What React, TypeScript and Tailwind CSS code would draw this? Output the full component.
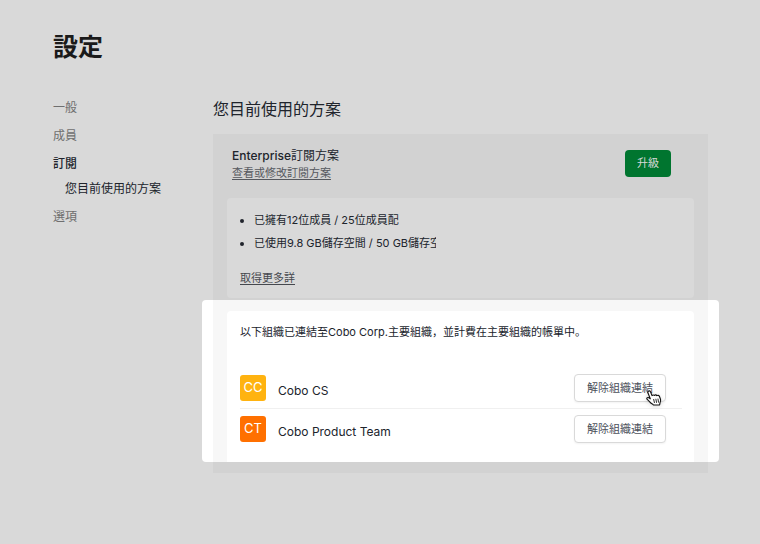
import React from 'react';

interface NavItem {
  id: string;
  label: string;
  active?: boolean;
  children?: string[];
}

interface Organization {
  id: string;
  initials: string;
  name: string;
  color: string;
  hovered?: boolean;
}

const NAV_ITEMS: NavItem[] = [
  { id: 'general', label: '一般' },
  { id: 'members', label: '成員' },
  { id: 'subscription', label: '訂閱', active: true, children: ['您目前使用的方案'] },
  { id: 'options', label: '選項' },
];

const ORGANIZATIONS: Organization[] = [
  { id: 'cs', initials: 'CC', name: 'Cobo CS', color: 'bg-[#ffb310]', hovered: true },
  { id: 'product', initials: 'CT', name: 'Cobo Product Team', color: 'bg-[#ff7000]' },
];

const HandCursor: React.FC = () => (
  <svg
    aria-hidden="true"
    viewBox="0 0 16 17"
    className="pointer-events-none absolute top-[15px] left-[71px] h-[17px] w-4 drop-shadow-sm"
  >
    <path
      d="M2.3 1.3C3 .6 4.1.8 4.5 1.8L6 5.6C6.5 4.8 7.8 4.7 8.4 5.5C9 4.7 10.3 4.7 10.9 5.6C11.7 5 13 5.3 13.4 6.3L14.4 9C14.9 10.4 14.5 11.6 14 12.8L13.6 15H7.4L6.7 14.2C5.3 13.4 4.4 12.8 3.5 11.6L1 9.2C.4 8.2 1.3 7.1 2.4 7.6L4.3 8.8L1.9 2.8C1.7 2.2 1.8 1.7 2.3 1.3Z"
      fill="#fff"
      stroke="#111"
      strokeWidth="1.1"
      strokeLinejoin="round"
    />
    <path
      d="M7.7 9.4L8.4 12.6M9.9 9.2L10.5 12.4M12 9L12.5 12.2"
      fill="none"
      stroke="#111"
      strokeWidth=".9"
      strokeLinecap="round"
    />
  </svg>
);

const SideNav: React.FC = () => (
  <nav className="w-40 shrink-0 text-[12px]">
    <ul>
      {NAV_ITEMS.map((item) => (
        <li key={item.id}>
          <a
            href={`#${item.id}`}
            className={`block leading-7 ${item.active ? 'font-medium text-[#20242c]' : 'text-[#6f6f6f]'}`}
          >
            {item.label}
          </a>
          {item.children && (
            <ul className="pb-[3px] pl-3">
              {item.children.map((child) => (
                <li key={child}>
                  <a href="#plan" className="block leading-[22px] text-[#20242c]">
                    {child}
                  </a>
                </li>
              ))}
            </ul>
          )}
        </li>
      ))}
    </ul>
  </nav>
);

const OrganizationRow: React.FC<{ org: Organization }> = ({ org }) => (
  <li className="flex items-center border-b border-[#f0f0f0] py-[6px] last:border-b-0">
    <span
      className={`flex size-[26px] items-center justify-center rounded-[3px] text-[13px] text-white ${org.color}`}
    >
      {org.initials}
    </span>
    <span className="ml-3 flex-1 pt-[6px] text-[12px] leading-5 text-[#20242c]">{org.name}</span>
    <button
      type="button"
      className="relative mr-4 h-7 rounded border border-[#d9d9d9] bg-white px-3 text-[11px] text-[#4a4f5a] shadow-xs"
    >
      解除組織連結
      {org.hovered && <HandCursor />}
    </button>
  </li>
);

const App: React.FC = () => {
  return (
    <div className="min-h-screen bg-[#d9d9d9] pt-[27px] pr-[52px] pb-[71px] pl-[53px] font-['Inter','Noto_Sans_CJK_JP',sans-serif] text-[#20242c]">
      <h1 className="text-[25px] leading-10 font-bold text-[#1a1a1a]">設定</h1>

      <div className="mt-[27px] flex">
        <SideNav />

        <main className="min-w-0 flex-1">
          <h2 className="pt-[3px] text-[16px] leading-6">您目前使用的方案</h2>

          <section id="plan" className="mt-[13px] bg-[#d2d2d2] pb-[11px]">
            <header className="flex items-start justify-between pt-[13px] pr-[37px] pb-[17px] pl-[19px]">
              <div>
                <h3 className="text-[12px] leading-[18px]">
                  <span className="font-medium">Enterprise</span>訂閱方案
                </h3>
                <a href="#subscription" className="block text-[11px] leading-4 text-[#55585e] underline underline-offset-2">
                  查看或修改訂閱方案
                </a>
              </div>
              <button type="button" className="mt-[3px] h-[27px] rounded bg-[#00752f] px-3 text-[11px] text-[#d9d9d9]">
                升級
              </button>
            </header>

            {/* Usage summary */}
            <div className="mx-[14px] rounded bg-[#d9d9d9] px-[13px] pt-[11px] pb-3 text-[11px]">
              <ul className="list-disc pl-[14px] leading-[23px]">
                <li>已擁有12位成員 / 25位成員配</li>
                <li>
                  <span className="block w-[182px] overflow-hidden whitespace-nowrap">
                    已使用9.8 GB儲存空間 / 50 GB儲存空
                  </span>
                </li>
              </ul>
              <a href="#details" className="mt-[15px] block w-fit leading-4 text-[#45484e] underline underline-offset-2">
                取得更多詳
              </a>
            </div>

            {/* Linked organizations, raised above the dimmed page */}
            <div className="-mx-[11px] mt-[2px] rounded bg-white">
              <div className="mx-[11px] bg-[#f7f7f7] px-[14px] pt-[11px]">
                <div className="rounded-t bg-white pr-3 pb-[13px] pl-[13px]">
                  <p className="pt-3 text-[11px] leading-[18px]">
                    以下組織已連結至Cobo Corp.主要組織，並計費在主要組織的帳單中。
                  </p>
                  <ul className="pt-[27px]">
                    {ORGANIZATIONS.map((org) => (
                      <OrganizationRow key={org.id} org={org} />
                    ))}
                  </ul>
                </div>
              </div>
            </div>
          </section>
        </main>
      </div>
    </div>
  );
};

export default App;
